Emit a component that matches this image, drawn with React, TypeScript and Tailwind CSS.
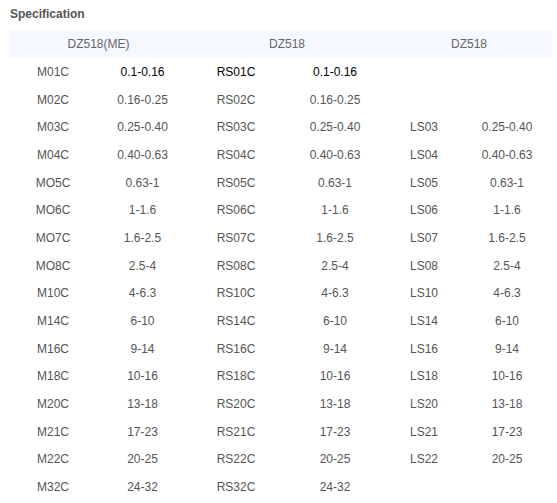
const rows: string[][] = [
  ["M01C", "0.1-0.16", "RS01C", "0.1-0.16", "", ""],
  ["M02C", "0.16-0.25", "RS02C", "0.16-0.25", "", ""],
  ["M03C", "0.25-0.40", "RS03C", "0.25-0.40", "LS03", "0.25-0.40"],
  ["M04C", "0.40-0.63", "RS04C", "0.40-0.63", "LS04", "0.40-0.63"],
  ["MO5C", "0.63-1", "RS05C", "0.63-1", "LS05", "0.63-1"],
  ["MO6C", "1-1.6", "RS06C", "1-1.6", "LS06", "1-1.6"],
  ["MO7C", "1.6-2.5", "RS07C", "1.6-2.5", "LS07", "1.6-2.5"],
  ["MO8C", "2.5-4", "RS08C", "2.5-4", "LS08", "2.5-4"],
  ["M10C", "4-6.3", "RS10C", "4-6.3", "LS10", "4-6.3"],
  ["M14C", "6-10", "RS14C", "6-10", "LS14", "6-10"],
  ["M16C", "9-14", "RS16C", "9-14", "LS16", "9-14"],
  ["M18C", "10-16", "RS18C", "10-16", "LS18", "10-16"],
  ["M20C", "13-18", "RS20C", "13-18", "LS20", "13-18"],
  ["M21C", "17-23", "RS21C", "17-23", "LS21", "17-23"],
  ["M22C", "20-25", "RS22C", "20-25", "LS22", "20-25"],
  ["M32C", "24-32", "RS32C", "24-32", "", ""],
];

const cols = "grid grid-cols-[88px_91px_96px_102px_76px_90px]";

const App = () => {
  return (
    <div className="w-[557px] h-[503px] bg-white overflow-hidden font-['Liberation_Sans',Arial,sans-serif] text-[12px]">
      <h2 className="pl-[10px] pt-[6px] h-[30px] font-bold text-[12px] leading-[16px] text-[#555]">Specification</h2>
      <div className="ml-[9px] w-[543px]">
        <div className={`${cols} h-[28px] bg-[#f5f9ff] text-[#666] items-center text-center`}>
          <div className="col-span-2">DZ518(ME)</div>
          <div className="col-span-2">DZ518</div>
          <div className="col-span-2">DZ518</div>
        </div>
        {rows.map((row, i) => (
          <div key={row[0]} className={`${cols} h-[27.7px] items-center text-center text-[#555]`}>
            {row.map((cell, j) => (
              <div key={j} className={i === 0 && j > 0 ? "text-black" : ""}>
                {cell}
              </div>
            ))}
          </div>
        ))}
      </div>
    </div>
  );
};

export default App;
